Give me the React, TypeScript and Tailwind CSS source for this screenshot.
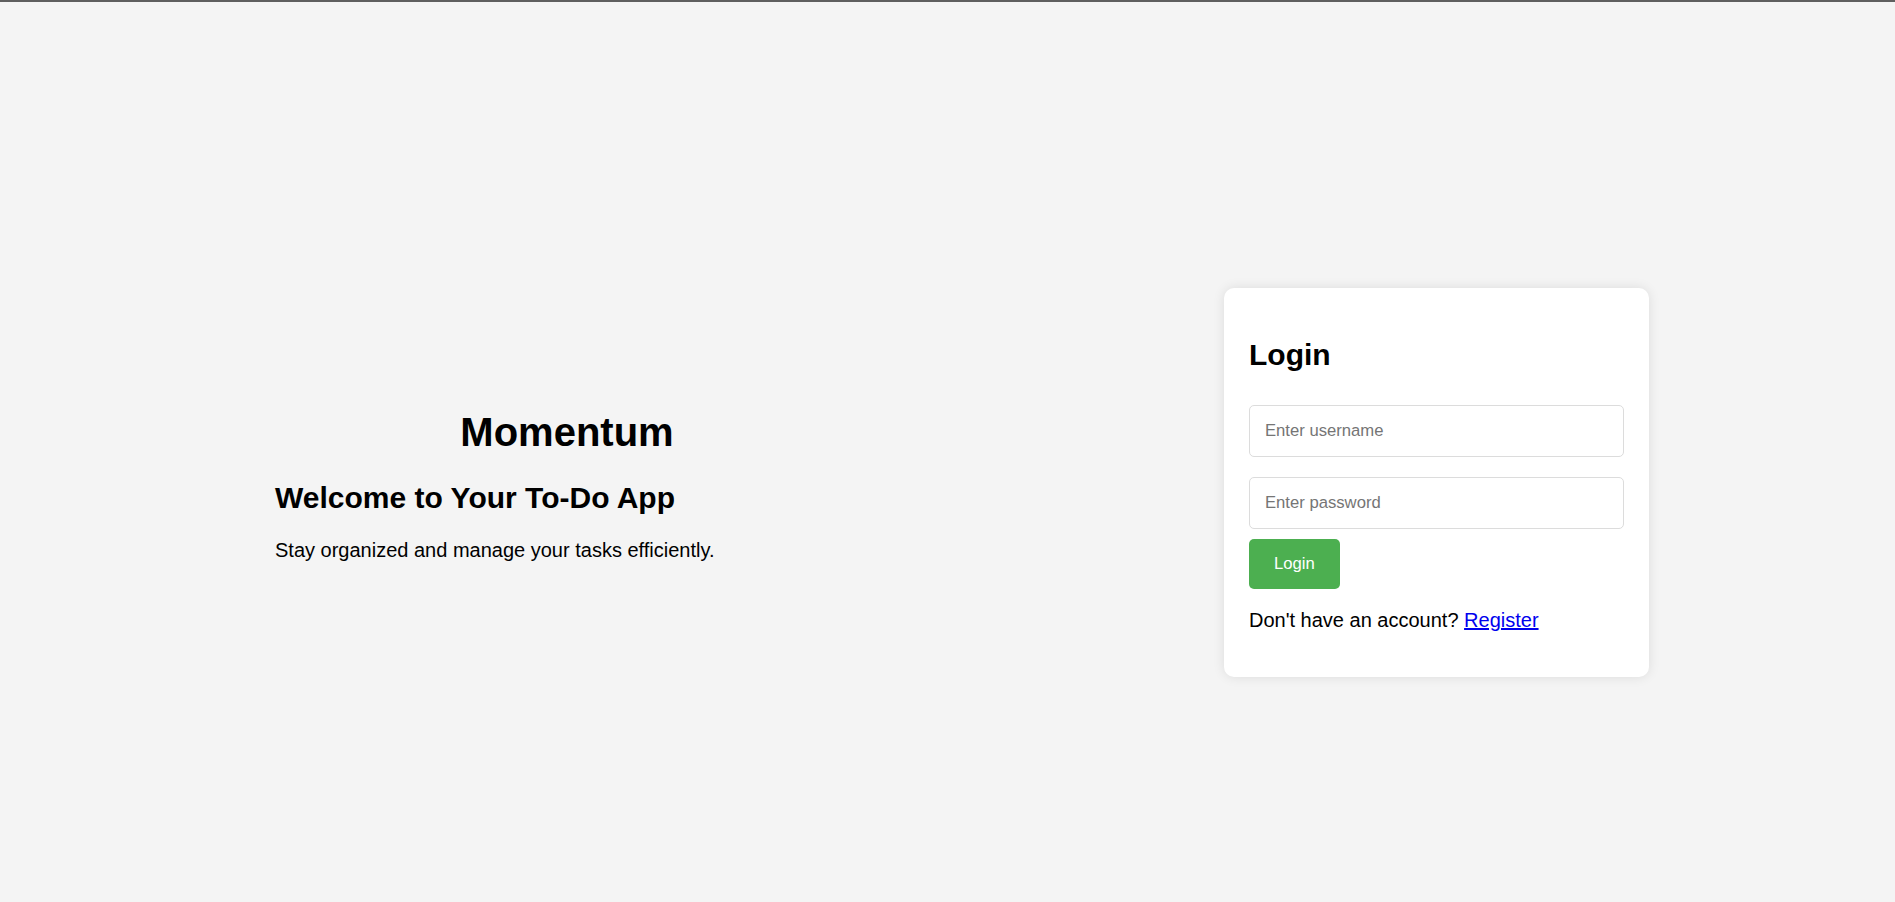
export default function App() {
  return (
    <div className="min-h-screen bg-[#f4f4f4] font-['Liberation_Sans',Arial,sans-serif] text-black leading-[normal]">
      {/* thin top rule */}
      <div className="h-[2px] bg-[#5f5f5f]" />

      <div className="flex items-center h-[900px] pt-[61px]">
        {/* Intro */}
        <div className="ml-[275px] w-[584px]">
          <h1 className="text-[40px] font-bold text-center mt-[27px] mb-[26px]">Momentum</h1>
          <h2 className="text-[30px] font-bold mb-[24px]">Welcome to Your To-Do App</h2>
          <p className="text-[20px] mb-[20px]">Stay organized and manage your tasks efficiently.</p>
        </div>

        {/* Login card */}
        <div className="ml-auto mr-[246px] w-[425px] p-[25px] bg-white rounded-[10px] shadow-[0_0_12px_rgba(0,0,0,0.1)]">
          <h2 className="text-[30px] font-bold mt-[25px] mb-[33px]">Login</h2>
          <form onSubmit={(e) => e.preventDefault()}>
            <input
              type="text"
              placeholder="Enter username"
              className="block w-full h-[52px] px-[15px] mb-[20px] text-[16.67px] border border-[#dcdcdc] rounded-[5px] outline-none placeholder:text-[#757575]"
            />
            <input
              type="password"
              placeholder="Enter password"
              className="block w-full h-[52px] px-[15px] mb-[10px] text-[16.67px] border border-[#dcdcdc] rounded-[5px] outline-none placeholder:text-[#757575]"
            />
            <button
              type="submit"
              className="block px-[25px] py-[15px] text-[16.67px] leading-[20px] text-white bg-[#4caf50] rounded-[5px]"
            >
              Login
            </button>
          </form>
          <p className="text-[20px] mt-[20px] mb-[20px]">
            Don't have an account? <a href="#" className="text-[#0000ee] underline">Register</a>
          </p>
        </div>
      </div>
    </div>
  );
}
